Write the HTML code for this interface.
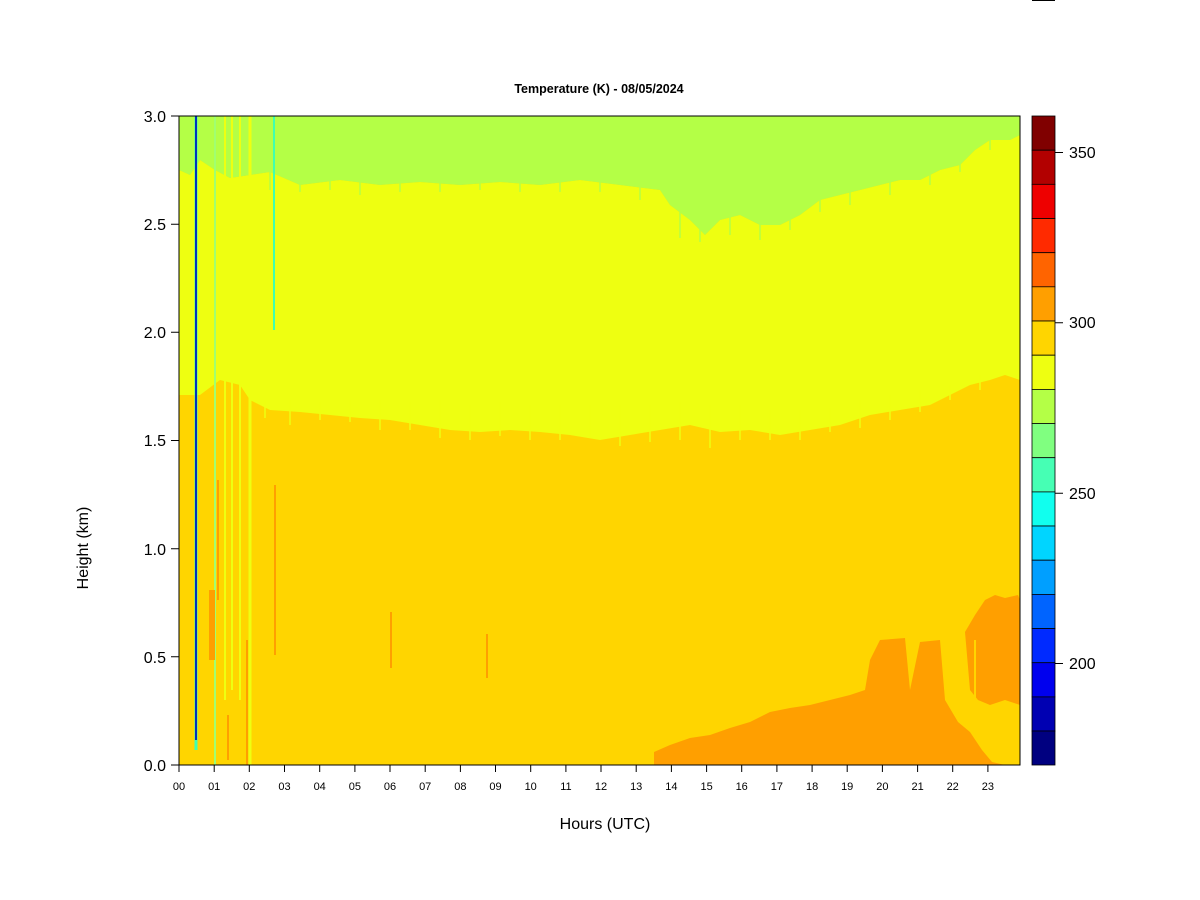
<!DOCTYPE html>
<html><head><meta charset="utf-8"><style>
html,body{margin:0;padding:0;background:#fff;}
svg{display:block;}
text{font-family:"Liberation Sans",Arial,sans-serif;fill:#000;}
</style></head><body>
<svg width="1200" height="900" viewBox="0 0 1200 900" xmlns="http://www.w3.org/2000/svg">
<rect x="1032" y="0" width="23" height="1" fill="#000"/>
<text x="599" y="93" font-size="12.5" font-weight="bold" text-anchor="middle">Temperature (K) - 08/05/2024</text>
<rect x="179" y="116" width="841" height="649" fill="#ffd500"/>
<polygon fill="#eeff11" points="179,170 190,175 200,160 215,170 230,178 250,175 270,172 300,185 340,180 380,185 420,182 460,185 500,182 540,185 580,180 620,185 660,190 670,205 690,220 705,235 720,220 740,215 760,225 780,225 800,215 820,200 840,195 860,190 880,185 900,180 920,180 940,170 960,165 975,150 990,140 1010,140 1020,135 1020,380 1005,375 990,380 970,385 950,395 930,405 900,410 870,415 840,425 810,430 780,435 750,430 720,432 690,425 660,430 630,435 600,440 570,435 540,432 510,430 480,432 450,430 420,425 390,420 360,418 330,415 300,412 270,410 250,400 240,385 220,380 200,395 190,395 179,395"/>
<g stroke="#eeff11" stroke-width="1.5">
<path d="M265 400V418M290 400V425M320 402V420M350 400V422M380 400V430M410 402V430M440 400V438M470 405V440M500 402V436M530 405V440M560 405V440M590 405V438M620 405V446M650 405V442M680 402V440M710 405V448M740 405V440M770 410V440M800 410V440M830 408V432M860 400V428M890 395V420M920 390V412M950 385V400M980 375V390"/>
</g>
<g stroke="#b4ff46" stroke-width="1.5">
<path d="M270 165V190M300 170V192M330 172V190M360 170V195M400 170V192M440 172V192M480 172V190M520 172V192M560 172V192M600 172V192M640 175V200M680 190V238M700 210V242M730 200V235M760 205V240M790 205V230M820 190V212M850 182V205M890 170V195M930 165V185M960 140V172M990 130V150"/>
</g>
<polygon fill="#b4ff46" points="179,116 1020,116 1020,135 1010,140 990,140 975,150 960,165 940,170 920,180 900,180 880,185 860,190 840,195 820,200 800,215 780,225 760,225 740,215 720,220 705,235 690,220 670,205 660,190 620,185 580,180 540,185 500,182 460,185 420,182 380,185 340,180 300,185 270,172 250,175 230,178 215,170 200,160 190,175 179,170"/>
<g stroke-width="2">
<path d="M215 116V765" stroke="#a0ff70" stroke-width="2"/>
<path d="M225 116V700" stroke="#eeff11"/>
<path d="M232 116V690" stroke="#eeff11"/>
<path d="M240 116V700" stroke="#eeff11"/>
<path d="M250 116V765" stroke="#eeff11" stroke-width="3"/>
<path d="M274 116V330" stroke="#40ffb0"/>
<path d="M212 590V660" stroke="#ff9f00" stroke-width="6"/>
<path d="M218 480V600" stroke="#ff9f00"/>
<path d="M275 485V655" stroke="#ff9f00"/>
<path d="M391 612V668" stroke="#ff9f00"/>
<path d="M487 634V678" stroke="#ff9f00"/>
<path d="M228 715V760" stroke="#ff9f00"/>
<path d="M247 640V765" stroke="#ff9f00"/>
</g>
<path d="M196 116V750" stroke="#40ffb0" stroke-width="3"/>
<path d="M196 116V740" stroke="#0030c0" stroke-width="2"/>
<polygon fill="#ff9f00" points="654,765 654,752 670,745 690,738 710,735 730,728 750,722 770,712 790,708 810,705 830,700 850,695 865,690 870,660 880,640 905,638 910,690 920,642 940,640 945,700 958,722 970,732 982,750 992,762 1005,765"/>
<polygon fill="#ff9f00" points="965,632 975,615 985,600 995,595 1005,598 1018,595 1020,600 1020,705 1005,700 990,705 978,700 970,690"/>
<g stroke="#ffd500" stroke-width="2"><path d="M960 640V720M975 640V730M990 705V740"/></g>
<rect x="179" y="116" width="841" height="649" fill="none" stroke="#000" stroke-width="1"/>
<g stroke="#000" stroke-width="1">
<path d="M179 765V772M214.2 765V772M249.3 765V772M284.5 765V772M319.7 765V772M354.9 765V772M390 765V772M425.2 765V772M460.4 765V772M495.5 765V772M530.7 765V772M565.9 765V772M601 765V772M636.2 765V772M671.4 765V772M706.6 765V772M741.7 765V772M776.9 765V772M812.1 765V772M847.2 765V772M882.4 765V772M917.6 765V772M952.7 765V772M987.9 765V772"/>
<path d="M171 765H179M171 656.8H179M171 548.7H179M171 440.5H179M171 332.3H179M171 224.2H179M171 116H179"/>
</g>
<g font-size="11" text-anchor="middle">
<text x="179" y="790">00</text><text x="214.2" y="790">01</text><text x="249.3" y="790">02</text><text x="284.5" y="790">03</text><text x="319.7" y="790">04</text><text x="354.9" y="790">05</text><text x="390" y="790">06</text><text x="425.2" y="790">07</text><text x="460.4" y="790">08</text><text x="495.5" y="790">09</text><text x="530.7" y="790">10</text><text x="565.9" y="790">11</text><text x="601" y="790">12</text><text x="636.2" y="790">13</text><text x="671.4" y="790">14</text><text x="706.6" y="790">15</text><text x="741.7" y="790">16</text><text x="776.9" y="790">17</text><text x="812.1" y="790">18</text><text x="847.2" y="790">19</text><text x="882.4" y="790">20</text><text x="917.6" y="790">21</text><text x="952.7" y="790">22</text><text x="987.9" y="790">23</text>
</g>
<g font-size="16" text-anchor="end">
<text x="166" y="771">0.0</text><text x="166" y="663">0.5</text><text x="166" y="555">1.0</text><text x="166" y="446">1.5</text><text x="166" y="338">2.0</text><text x="166" y="230">2.5</text><text x="166" y="122">3.0</text>
</g>
<text x="605" y="829" font-size="16" text-anchor="middle">Hours (UTC)</text>
<text transform="translate(88,548) rotate(-90)" font-size="16" text-anchor="middle">Height (km)</text>
<g stroke="#000" stroke-width="0.8">
<rect x="1032" y="116" width="23" height="34.2" fill="#800000"/>
<rect x="1032" y="150.2" width="23" height="34.2" fill="#b20000"/>
<rect x="1032" y="184.3" width="23" height="34.2" fill="#ee0000"/>
<rect x="1032" y="218.5" width="23" height="34.2" fill="#ff2a00"/>
<rect x="1032" y="252.7" width="23" height="34.2" fill="#ff6400"/>
<rect x="1032" y="286.8" width="23" height="34.2" fill="#ff9f00"/>
<rect x="1032" y="321" width="23" height="34.2" fill="#ffd500"/>
<rect x="1032" y="355.2" width="23" height="34.2" fill="#eeff11"/>
<rect x="1032" y="389.4" width="23" height="34.2" fill="#b4ff46"/>
<rect x="1032" y="423.5" width="23" height="34.2" fill="#80ff80"/>
<rect x="1032" y="457.7" width="23" height="34.2" fill="#46ffb4"/>
<rect x="1032" y="491.9" width="23" height="34.2" fill="#11ffee"/>
<rect x="1032" y="526" width="23" height="34.2" fill="#00d5ff"/>
<rect x="1032" y="560.2" width="23" height="34.2" fill="#009fff"/>
<rect x="1032" y="594.4" width="23" height="34.2" fill="#0064ff"/>
<rect x="1032" y="628.6" width="23" height="34.2" fill="#002aff"/>
<rect x="1032" y="662.7" width="23" height="34.2" fill="#0000ee"/>
<rect x="1032" y="696.9" width="23" height="34.2" fill="#0000b2"/>
<rect x="1032" y="731" width="23" height="34" fill="#000080"/>
</g>
<g stroke="#000"><path d="M1055 152.5H1063M1055 322.8H1063M1055 493.2H1063M1055 663.5H1063"/></g>
<g font-size="16">
<text x="1069" y="158">350</text><text x="1069" y="328">300</text><text x="1069" y="499">250</text><text x="1069" y="669">200</text>
</g>
</svg>
</body></html>
